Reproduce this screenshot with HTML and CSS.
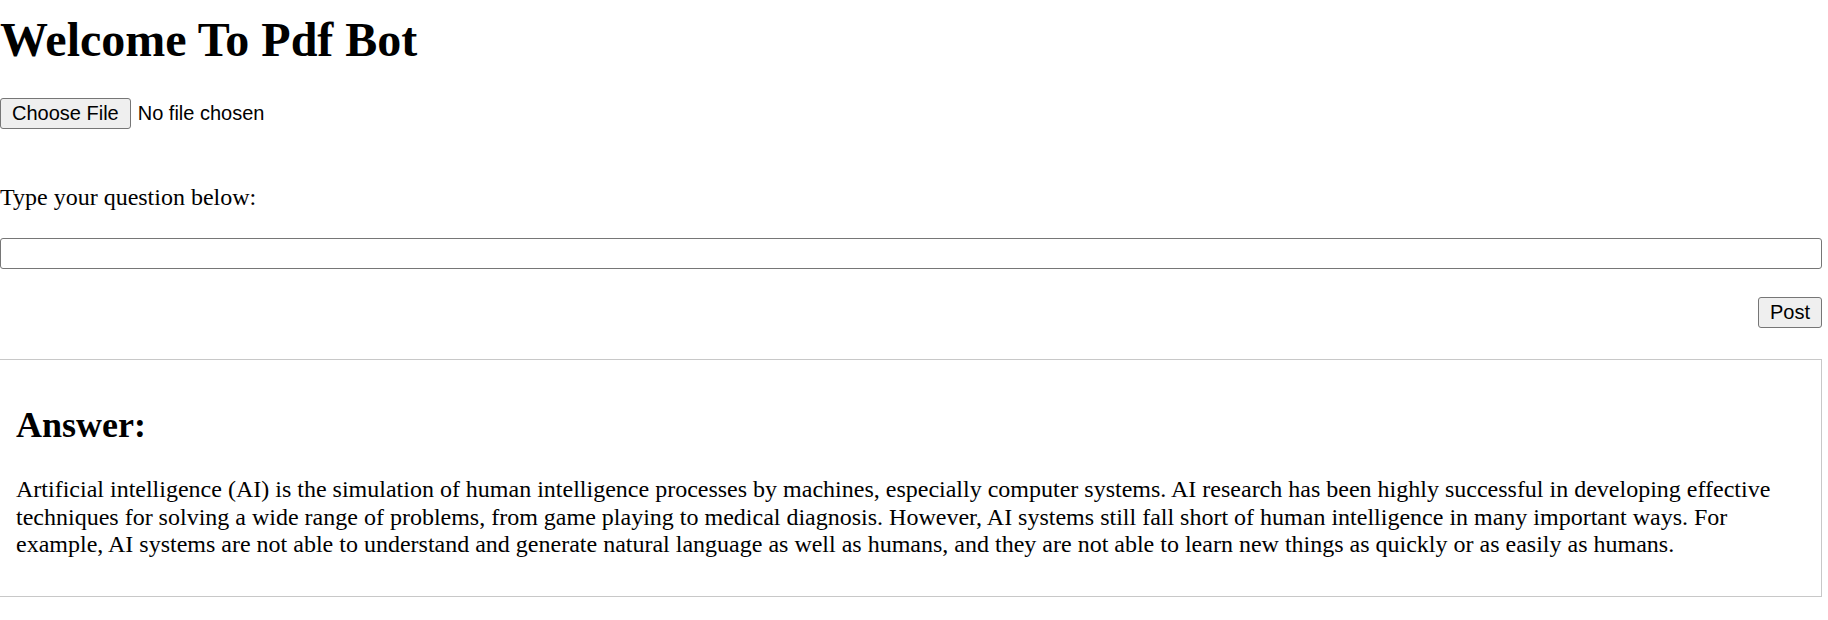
FILE: index.html
```html
<!DOCTYPE html>
<html lang="en">
<head>
<meta charset="utf-8">
<title>Welcome To Pdf Bot</title>
<link rel="stylesheet" href="styles.css">
</head>
<body>
<main class="page">
  <h1 class="title">Welcome To Pdf Bot</h1>
  <div class="file-row">
    <button class="btn" type="button">Choose File</button>
    <span class="file-name">No file chosen</span>
  </div>
  <label class="question-label" for="q">Type your question below:</label>
  <input class="question-input" id="q" type="text">
  <div class="post-row">
    <button class="btn" type="button">Post</button>
  </div>
  <section class="answer">
    <h2 class="answer-title">Answer:</h2>
    <p class="answer-text">Artificial intelligence (AI) is the simulation of human intelligence processes by machines, especially computer systems. AI research has been highly successful in developing effective techniques for solving a wide range of problems, from game playing to medical diagnosis. However, AI systems still fall short of human intelligence in many important ways. For example, AI systems are not able to understand and generate natural language as well as humans, and they are not able to learn new things as quickly or as easily as humans.</p>
  </section>
</main>
</body>
</html>
```

FILE: styles.css
```css
html, body {
  margin: 0;
  padding: 0;
  background: #ffffff;
}

body {
  font-family: "Liberation Serif", "Times New Roman", serif;
  font-size: 24px;
  color: #000000;
}

.page {
  width: 1822px;
  display: flex;
  flex-direction: column;
}

.title {
  margin: 12px 0 0;
  font-size: 48px;
  line-height: 55px;
  font-weight: bold;
}

.file-row {
  margin-top: 31px;
  display: flex;
  align-items: center;
  height: 31px;
}

.btn {
  box-sizing: border-box;
  height: 31px;
  margin: 0;
  padding: 0 11px;
  font-family: "Liberation Sans", Arial, sans-serif;
  font-size: 20px;
  line-height: 23px;
  color: #000000;
  background: #efefef;
  border: 1px solid #767676;
  border-radius: 3px;
}

.file-name {
  margin-left: 7px;
  font-family: "Liberation Sans", Arial, sans-serif;
  font-size: 20px;
  line-height: 23px;
}

.question-label {
  display: block;
  margin-top: 54px;
  line-height: 28px;
}

.question-input {
  box-sizing: border-box;
  display: block;
  margin: 27px 0 0;
  width: 1822px;
  height: 31px;
  padding: 0 3px;
  border: 1px solid #767676;
  border-radius: 3px;
  background: #ffffff;
  font-size: 20px;
}

.post-row {
  margin-top: 28px;
  display: flex;
  justify-content: flex-end;
}

.answer {
  box-sizing: border-box;
  margin-top: 31px;
  width: 1822px;
  padding: 45px 15px 37px 16px;
  border: 1px solid #c8c8c8;
  border-left: none;
}

.answer-title {
  margin: 0;
  font-size: 36px;
  line-height: 41px;
  font-weight: bold;
}

.answer-text {
  margin: 30px 0 0;
  line-height: 27.5px;
}
```
